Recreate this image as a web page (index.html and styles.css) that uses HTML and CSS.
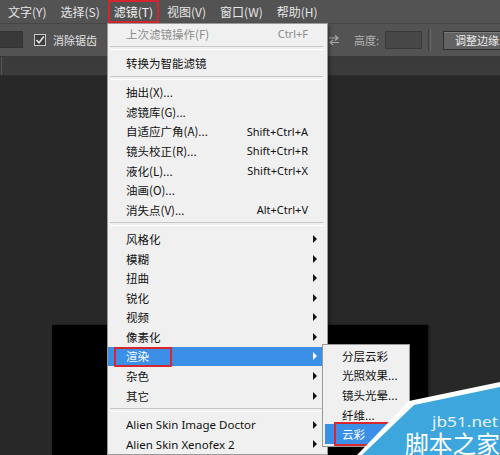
FILE: index.html
```html
<!DOCTYPE html>
<html lang="zh-CN">
<head>
<meta charset="utf-8">
<title>滤镜菜单</title>
<link rel="stylesheet" href="styles.css">
</head>
<body>
<div class="app">
  <div class="menubar">
    <div class="mb-item">文字(Y)</div>
    <div class="mb-item">选择(S)</div>
    <div class="mb-item active">滤镜(T)</div>
    <div class="mb-item">视图(V)</div>
    <div class="mb-item">窗口(W)</div>
    <div class="mb-item">帮助(H)</div>
  </div>
  <div class="toolbar">
    <div class="tb-input"></div>
    <svg class="tb-check" width="12" height="12" viewBox="0 0 12 12"><rect x="0.5" y="0.5" width="11" height="11" fill="#3e3e3e" stroke="#c9c9c9"/><polyline points="2.5,6 5,8.8 9.8,2.6" fill="none" stroke="#e6e6e6" stroke-width="1.6"/></svg>
    <span class="tb-label">消除锯齿</span>
    <svg class="tb-swap" width="12" height="12" viewBox="0 0 12 12"><path d="M1 4h9M7 1.5l3 2.5-3 2.5M11 8.5H2M5 6l-3 2.5 3 2.5" fill="none" stroke="#a9a9a9" stroke-width="1.2"/></svg>
    <span class="tb-label dim">高度:</span>
    <div class="tb-field"></div>
    <div class="tb-divider"></div>
    <div class="tb-button">调整边缘...</div>
  </div>
  <div class="tabs"><div class="tab-edge"></div></div>
  <div class="workspace"><div class="canvas"></div></div>
</div>

<div class="menu">
  <div class="mi disabled"><span>上次滤镜操作(F)</span><span class="sc">Ctrl+F</span></div>
  <div class="sep"></div>
  <div class="mi">转换为智能滤镜</div>
  <div class="sep"></div>
  <div class="mi">抽出(X)...</div>
  <div class="mi">滤镜库(G)...</div>
  <div class="mi"><span>自适应广角(A)...</span><span class="sc">Shift+Ctrl+A</span></div>
  <div class="mi"><span>镜头校正(R)...</span><span class="sc">Shift+Ctrl+R</span></div>
  <div class="mi"><span>液化(L)...</span><span class="sc">Shift+Ctrl+X</span></div>
  <div class="mi">油画(O)...</div>
  <div class="mi"><span>消失点(V)...</span><span class="sc">Alt+Ctrl+V</span></div>
  <div class="sep"></div>
  <div class="mi sub">风格化</div>
  <div class="mi sub">模糊</div>
  <div class="mi sub">扭曲</div>
  <div class="mi sub">锐化</div>
  <div class="mi sub">视频</div>
  <div class="mi sub">像素化</div>
  <div class="mi sub hl"><span class="mark mark-render"></span>渲染</div>
  <div class="mi sub">杂色</div>
  <div class="mi sub">其它</div>
  <div class="sep"></div>
  <div class="mi sub latin">Alien Skin Image Doctor</div>
  <div class="mi sub latin">Alien Skin Xenofex 2</div>
</div>

<div class="submenu">
  <div class="smi">分层云彩</div>
  <div class="smi">光照效果...</div>
  <div class="smi">镜头光晕...</div>
  <div class="smi">纤维...</div>
  <div class="smi hl"><span class="mark mark-cloud"></span>云彩</div>
</div>

<svg class="watermark" width="160" height="80" viewBox="340 375 160 80">
  <polygon points="409,401 500,382 500,455 357,455" fill="#ffffff"/>
  <polygon points="414,405 500,387 500,455 362,455" fill="#3da6dc"/>
  <text x="432" y="427" font-family="Noto Sans, sans-serif" font-size="15" fill="#e6f3fb" textLength="66" lengthAdjust="spacingAndGlyphs">jb51.net</text>
  <text x="405" y="453" font-family="Noto Sans CJK SC, sans-serif" font-size="24" fill="#ffffff" textLength="95" lengthAdjust="spacingAndGlyphs">脚本之家</text>
</svg>
</body>
</html>
```

FILE: styles.css
```css
* { box-sizing: border-box; }

body {
  margin: 0;
  width: 500px;
  height: 455px;
  overflow: hidden;
  position: relative;
  background: #282828;
  font-family: "Noto Sans CJK SC", "Noto Sans", sans-serif;
}

.app {
  display: flex;
  flex-direction: column;
  height: 455px;
}

/* ---------- menu bar ---------- */
.menubar {
  height: 24px;
  flex: none;
  background: #535353;
  display: flex;
  align-items: stretch;
  padding-left: 2px;
  border-bottom: 1px solid #464646;
}

.mb-item {
  padding: 0 6px;
  display: flex;
  align-items: center;
  font-size: 12px;
  color: #e6e6e6;
  margin-right: 2px;
}

.mb-item.active {
  color: #f4f4f4;
  box-shadow: inset 0 0 0 2px #d3262e;
}

/* ---------- options toolbar ---------- */
.toolbar {
  height: 33px;
  flex: none;
  background: #535353;
  display: flex;
  align-items: center;
  border-bottom: 1px solid #393939;
  overflow: hidden;
}

.toolbar > * { flex: none; }

.tb-input {
  width: 23px;
  height: 17px;
  background: #393939;
  border: 1px solid #333;
  border-left: none;
  margin-top: -2px;
}

.tb-check { margin-left: 11px; }

.tb-label {
  margin-left: 7px;
  font-size: 11px;
  color: #e2e2e2;
  white-space: nowrap;
}

.tb-label.dim { margin-left: 14px; color: #b4b4b4; }

.tb-swap { margin-left: 231px; }

.tb-field {
  margin-left: 6px;
  width: 37px;
  height: 18px;
  background: #474747;
  border: 1px solid #3a3a3a;
}

.tb-divider {
  margin-left: 6px;
  width: 3px;
  height: 22px;
  border-left: 1px solid #3c3c3c;
  border-right: 1px solid #676767;
}

.tb-button {
  margin-left: 12px;
  width: 80px;
  height: 19px;
  background: #626262;
  border: 1px solid #2e2e2e;
  box-shadow: inset 0 1px 0 #7c7c7c;
  color: #ececec;
  font-size: 11px;
  padding-left: 11px;
  display: flex;
  align-items: center;
  white-space: nowrap;
}

/* ---------- tab strip & workspace ---------- */
.tabs {
  height: 19px;
  flex: none;
  background: #3b3b3b;
  border-bottom: 1px solid #2c2c2c;
  padding-left: 1px;
}

.tab-edge {
  width: 1px;
  height: 100%;
  background: #555;
}

.workspace {
  flex: 1;
  background: #282828;
  padding: 249px 0 0 52px;
  display: flex;
}

.canvas {
  width: 376px;
  background: #000;
  box-shadow: 1px 0 2px rgba(0,0,0,0.5);
}

/* ---------- filter menu ---------- */
.menu {
  position: absolute;
  left: 107px;
  top: 23px;
  width: 221px;
  background: #f0f0f0;
  border: 1px solid #9a9a9a;
  font-size: 11.5px;
  color: #111;
  box-shadow: 2px 2px 3px rgba(0,0,0,0.35);
}

.mi {
  height: 19.6px;
  display: flex;
  align-items: center;
  padding-left: 18px;
  padding-right: 19px;
  position: relative;
  white-space: nowrap;
}

.mi.latin { font-family: "Noto Sans", "Noto Sans CJK SC", sans-serif; font-size: 11.5px; }

.mi.disabled { color: #8d8d8d; }

.mi .sc { margin-left: auto; font-family: "Noto Sans", sans-serif; font-size: 11px; }

.mi.sub::after {
  content: "";
  position: absolute;
  right: 10px;
  top: 50%;
  margin-top: -4px;
  border-left: 4px solid #111;
  border-top: 4px solid transparent;
  border-bottom: 4px solid transparent;
}

.mi.hl {
  background: #3c8fe6;
  color: #fff;
}

.mi.hl::after { border-left-color: #fff; }

.sep {
  height: 9.6px;
  margin: 0 4px 0 2px;
  display: flex;
  align-items: center;
}

.sep::before {
  content: "";
  flex: 1;
  height: 2px;
  border-top: 1px solid #c6c6c6;
  border-bottom: 1px solid #ffffff;
}

.mark {
  position: absolute;
  border: 2px solid #d8262f;
  border-radius: 1px;
}

.mark-render {
  left: 6px;
  top: 0;
  width: 58px;
  height: 20px;
}

/* ---------- render submenu ---------- */
.submenu {
  position: absolute;
  left: 322px;
  top: 344px;
  width: 88px;
  background: #f0f0f0;
  border: 1px solid #9a9a9a;
  padding: 1px 0 2px;
  font-size: 11.5px;
  color: #111;
}

.smi {
  height: 19.6px;
  display: flex;
  align-items: center;
  padding-left: 19px;
  position: relative;
  white-space: nowrap;
}

.smi.hl {
  background: #3c8fe6;
  color: #fff;
  margin-left: 2px;
  padding-left: 17px;
}

.mark-cloud {
  left: 9px;
  top: -2px;
  width: 60px;
  height: 24px;
}

/* ---------- watermark ---------- */
.watermark {
  position: absolute;
  left: 340px;
  top: 375px;
}
```
